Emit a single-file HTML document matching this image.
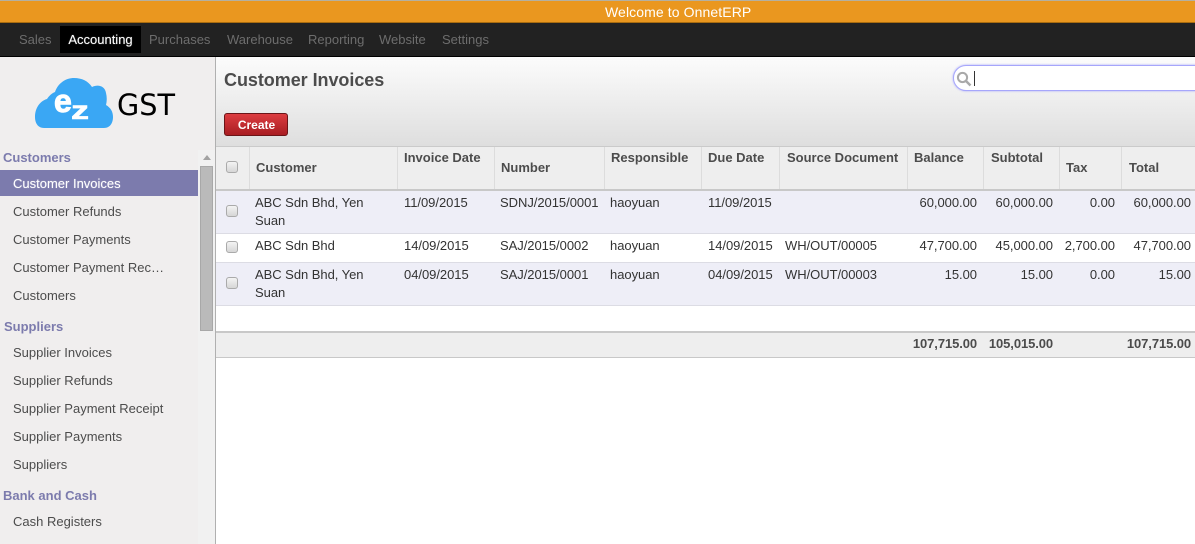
<!DOCTYPE html>
<html><head><meta charset="utf-8">
<style>
html,body{margin:0;padding:0;width:1195px;height:544px;overflow:hidden;background:#fff;font-family:"Liberation Sans",Arial,sans-serif;font-size:13px;color:#4c4c4c}
.a{position:absolute;white-space:nowrap}
#top{left:0;top:0;width:1195px;height:23px;background:#ea971f;border-top:1px solid #b5b0a0;box-sizing:border-box;border-bottom:1px solid #a86c10;color:#fff;font-size:14px;line-height:23px;text-align:center}
#top span{position:absolute;left:605px;top:0;letter-spacing:.1px}
#nav{left:0;top:23px;width:1195px;height:34px;background:#222;border-bottom:1px solid #000;box-sizing:border-box}
.m{top:9px;font-size:13px;color:#6d6d6d;line-height:16px}
#act{left:60px;top:3px;width:81px;height:27px;background:#000;color:#fff;font-size:13px;line-height:27px;text-align:center;font-weight:400;text-shadow:0 0 1px rgba(255,255,255,.5)}
#side{left:0;top:57px;width:215px;height:487px;background:#f0eeee;border-right:1px solid #b0b0b0}
.g{left:3px;font-weight:700;color:#7c7bad;font-size:13px;line-height:16px}
.i{left:13px;color:#4c4c4c;line-height:16px}
#sel{left:0;top:170px;width:198px;height:26px;background:#7c7bad;color:#fff;line-height:26px;padding:1px 0 0 13px;box-sizing:border-box;font-weight:400;text-shadow:0 0 1px rgba(255,255,255,.5)}
#head{left:216px;top:57px;width:979px;height:90px;background:linear-gradient(#fcfcfc,#dedede);border-bottom:1px solid #cacaca;box-sizing:border-box}
#title{left:224px;top:69px;font-size:18px;font-weight:700;color:#4c4c4c;line-height:22px;letter-spacing:-.05px}
#btn{left:224px;top:113px;width:64px;height:23px;box-sizing:border-box;border:1px solid #6b1518;border-radius:3px;background:linear-gradient(#dc3c40,#a81d22);color:#fff;font-weight:700;font-size:12px;line-height:21px;padding:1px 0 0 1px;text-align:center}
#search{left:953px;top:65px;width:260px;height:26px;box-sizing:border-box;border:1px solid #a6a6fb;border-radius:13px;background:#fff;box-shadow:0 0 2px #a6a6fb}
#thead{left:216px;top:147px;width:979px;height:42px;background:#eee}
.v{top:147px;width:1px;height:42px;background:#dcdcdc}
.h{font-weight:700;color:#4c4c4c;line-height:16px;font-size:13px}
.r{height:1px;left:216px;width:979px}
.t{color:#333;line-height:18px;font-size:13px;letter-spacing:-.04px}
.n{text-align:right}
.cb{position:absolute;left:226px;width:12px;height:12px;box-sizing:border-box;border:1px solid #aaa;border-radius:3px;background:linear-gradient(#f3f3f3,#d6d6d6)}
.f{font-weight:700;color:#4c4c4c;line-height:16px;text-align:right;letter-spacing:-.1px}
</style></head><body>
<div class="a" id="top"><span>Welcome to OnnetERP</span></div>
<div class="a" id="nav">
<div class="a m" style="left:19px">Sales</div>
<div class="a" id="act">Accounting</div>
<div class="a m" style="left:149px">Purchases</div>
<div class="a m" style="left:227px">Warehouse</div>
<div class="a m" style="left:308px">Reporting</div>
<div class="a m" style="left:379px">Website</div>
<div class="a m" style="left:442px">Settings</div>
</div>
<div class="a" id="side"></div>
<svg class="a" style="left:30px;top:72px" width="150" height="62" viewBox="0 0 150 62">
<path d="M14 56C8 56 5 51 5 45C5 36 10 29 17 27C19 24 22 21 25 20C28 11 36 6 44 6C52 6 58 9 62 15C68 12 75 14 76 21C77 25 77 29 76 33C81 36 83 40 83 45C83 51 80 56 74 56Z" fill="#3aa7f4"/>
<text x="24" y="40" font-family="Liberation Sans" font-size="32" font-weight="700" fill="#fff" stroke="#fff" stroke-width="1">e</text>
<text x="41" y="47" font-family="Liberation Sans" font-size="26" font-weight="700" fill="#fff" stroke="#fff" stroke-width=".6" textLength="18" lengthAdjust="spacingAndGlyphs">z</text>
<text x="87" y="43" font-family="DejaVu Sans" font-size="29" fill="#000" textLength="58" lengthAdjust="spacingAndGlyphs">GST</text>
</svg>
<div class="a g" style="top:150px">Customers</div>
<div class="a" id="sel">Customer Invoices</div>
<div class="a i" style="top:204px">Customer Refunds</div>
<div class="a i" style="top:232px">Customer Payments</div>
<div class="a i" style="top:260px">Customer Payment Rec…</div>
<div class="a i" style="top:288px">Customers</div>
<div class="a g" style="top:319px;left:4px">Suppliers</div>
<div class="a i" style="top:345px">Supplier Invoices</div>
<div class="a i" style="top:373px">Supplier Refunds</div>
<div class="a i" style="top:401px">Supplier Payment Receipt</div>
<div class="a i" style="top:429px">Supplier Payments</div>
<div class="a i" style="top:457px">Suppliers</div>
<div class="a g" style="top:488px">Bank and Cash</div>
<div class="a i" style="top:514px">Cash Registers</div>
<div class="a" style="left:198px;top:150px;width:17px;height:394px;background:#f1f1f1"></div>
<div class="a" style="left:203px;top:155px;width:0;height:0;border-left:4px solid transparent;border-right:4px solid transparent;border-bottom:5px solid #a3a3a3"></div>
<div class="a" style="left:200px;top:166px;width:13px;height:165px;background:#bababa;border:1px solid #a8a8a8;box-sizing:border-box"></div>

<div class="a" id="head"></div>
<div class="a" id="title">Customer Invoices</div>
<div class="a" id="btn">Create</div>
<div class="a" id="search"></div>
<svg class="a" style="left:956px;top:71px" width="16" height="16" viewBox="0 0 16 16"><circle cx="6.5" cy="6.5" r="4.6" fill="none" stroke="#a9a9a9" stroke-width="2"/><path d="M10 10L14.500 14.500" stroke="#a9a9a9" stroke-width="2.500"/></svg>
<div class="a" style="left:974px;top:71px;width:1px;height:15px;background:#333"></div>

<div class="a" id="thead"></div>
<div class="a v" style="left:249px"></div>
<div class="a v" style="left:397px"></div>
<div class="a v" style="left:494px"></div>
<div class="a v" style="left:604px"></div>
<div class="a v" style="left:701px"></div>
<div class="a v" style="left:779px"></div>
<div class="a v" style="left:907px"></div>
<div class="a v" style="left:983px"></div>
<div class="a v" style="left:1059px"></div>
<div class="a v" style="left:1121px"></div>
<div class="a r" style="top:189px;height:2px;background:#c8c8c8"></div>
<div class="cb" style="top:161px"></div>
<div class="a h" style="left:256px;top:160px">Customer</div>
<div class="a h" style="left:404px;top:150px">Invoice Date</div>
<div class="a h" style="left:501px;top:160px">Number</div>
<div class="a h" style="left:611px;top:150px">Responsible</div>
<div class="a h" style="left:708px;top:150px">Due Date</div>
<div class="a h" style="left:787px;top:150px">Source Document</div>
<div class="a h" style="left:914px;top:150px">Balance</div>
<div class="a h" style="left:991px;top:150px">Subtotal</div>
<div class="a h" style="left:1066px;top:160px">Tax</div>
<div class="a h" style="left:1129px;top:160px">Total</div>

<div class="a r" style="top:191px;height:42px;background:#eeeef7"></div>
<div class="a r" style="top:233px;background:#dcdce4"></div>
<div class="a r" style="top:262px;background:#dcdce4"></div>
<div class="a r" style="top:263px;height:42px;background:#eeeef7"></div>
<div class="a r" style="top:305px;background:#dcdce4"></div>

<div class="cb" style="top:205px"></div>
<div class="a t" style="left:255px;top:194px">ABC Sdn Bhd, Yen<br>Suan</div>
<div class="a t" style="left:404px;top:194px">11/09/2015</div>
<div class="a t" style="left:500px;top:194px">SDNJ/2015/0001</div>
<div class="a t" style="left:610px;top:194px">haoyuan</div>
<div class="a t" style="left:708px;top:194px">11/09/2015</div>
<div class="a t n" style="right:218px;top:194px">60,000.00</div>
<div class="a t n" style="right:142px;top:194px">60,000.00</div>
<div class="a t n" style="right:80px;top:194px">0.00</div>
<div class="a t n" style="right:4px;top:194px">60,000.00</div>

<div class="cb" style="top:241px"></div>
<div class="a t" style="left:255px;top:237px">ABC Sdn Bhd</div>
<div class="a t" style="left:404px;top:237px">14/09/2015</div>
<div class="a t" style="left:500px;top:237px">SAJ/2015/0002</div>
<div class="a t" style="left:610px;top:237px">haoyuan</div>
<div class="a t" style="left:708px;top:237px">14/09/2015</div>
<div class="a t" style="left:785px;top:237px">WH/OUT/00005</div>
<div class="a t n" style="right:218px;top:237px">47,700.00</div>
<div class="a t n" style="right:142px;top:237px">45,000.00</div>
<div class="a t n" style="right:80px;top:237px">2,700.00</div>
<div class="a t n" style="right:4px;top:237px">47,700.00</div>

<div class="cb" style="top:277px"></div>
<div class="a t" style="left:255px;top:266px">ABC Sdn Bhd, Yen<br>Suan</div>
<div class="a t" style="left:404px;top:266px">04/09/2015</div>
<div class="a t" style="left:500px;top:266px">SAJ/2015/0001</div>
<div class="a t" style="left:610px;top:266px">haoyuan</div>
<div class="a t" style="left:708px;top:266px">04/09/2015</div>
<div class="a t" style="left:785px;top:266px">WH/OUT/00003</div>
<div class="a t n" style="right:218px;top:266px">15.00</div>
<div class="a t n" style="right:142px;top:266px">15.00</div>
<div class="a t n" style="right:80px;top:266px">0.00</div>
<div class="a t n" style="right:4px;top:266px">15.00</div>

<div class="a r" style="top:331px;height:2px;background:#c8c8c8"></div>
<div class="a r" style="top:333px;height:24px;background:#eee"></div>
<div class="a r" style="top:357px;background:#c8c8c8"></div>
<div class="a f" style="right:218px;top:336px">107,715.00</div>
<div class="a f" style="right:142px;top:336px">105,015.00</div>
<div class="a f" style="right:4px;top:336px">107,715.00</div>
</body></html>
